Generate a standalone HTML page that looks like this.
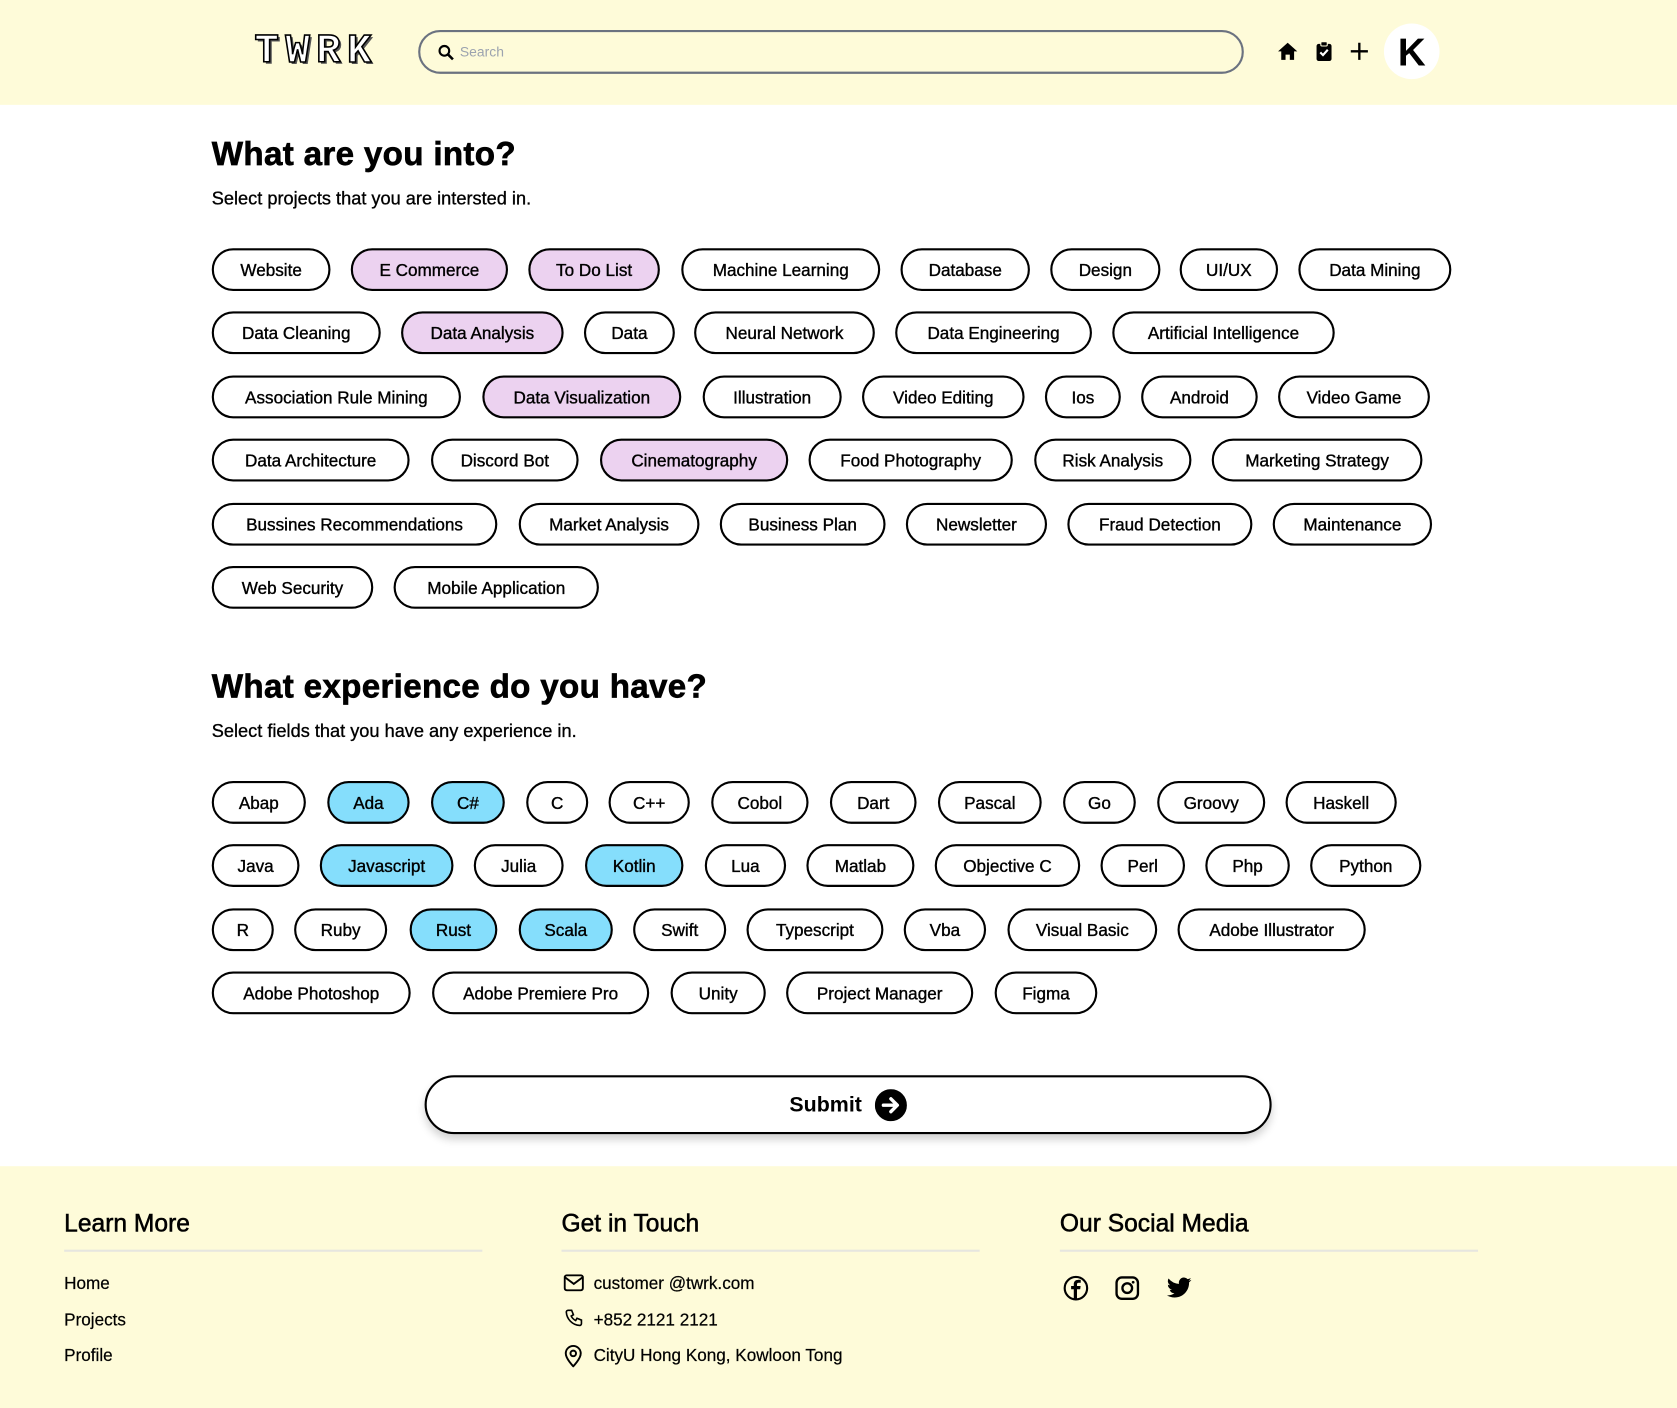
<!DOCTYPE html>
<html><head><meta charset="utf-8"><style>
*{box-sizing:border-box;margin:0;padding:0}
html,body{width:1677px;height:1408px;overflow:hidden;background:#fff;font-family:"Liberation Sans",sans-serif;color:#000}
#w{position:absolute;left:0;top:0;width:1568px;height:1316px;transform:scale(1.0695,1.0699);transform-origin:0 0;background:#fff}
.hdr{position:absolute;left:0;top:0;width:1568px;height:98px;background:#fefbd9}
.logo{position:absolute;left:238px;top:27px;font:bold 38px "Liberation Mono",monospace;color:#fff;-webkit-text-stroke:1.5px #000;letter-spacing:6px;text-shadow:2px 2px 0 #555}
.search{position:absolute;left:391px;top:28px;width:772px;height:41px;border:2px solid #6b7280;border-radius:21px}
.search span{position:absolute;left:37px;top:11px;font-size:13px;color:#9ca3af}
.c{position:absolute;height:40px;border:2px solid #000;border-radius:20px;font-size:16px;display:flex;align-items:center;justify-content:center;white-space:nowrap;background:#fff;padding-top:3px;-webkit-text-stroke:0.35px #000}
.p{background:#ecd2f0}.b{background:#85defc}
h1{position:absolute;left:198px;font-size:31px;font-weight:bold;-webkit-text-stroke:0.6px #000;letter-spacing:0.3px}
.sub{position:absolute;left:198px;font-size:17px;-webkit-text-stroke:0.3px #000}
.submit{position:absolute;left:397px;top:1005px;width:792px;height:55px;border:2px solid #000;border-radius:28px;box-shadow:0 5px 8px rgba(0,0,0,.18);display:flex;align-items:center;justify-content:center;font-size:20px;font-weight:bold;background:#fff;padding-top:2px}
.ftr{position:absolute;left:0;top:1090px;width:1568px;height:226px;background:#fefbd9}
.fh{position:absolute;top:1130px;font-size:23px;-webkit-text-stroke:0.5px #000}
.fl{position:absolute;top:1168px;width:391px;height:2px;background:#e6e6df}
.ft{position:absolute;font-size:16px;margin-top:2px;-webkit-text-stroke:0.2px #000}
</style></head><body><div id="w">
<div class="hdr"></div>
<div class="logo">TWRK</div>
<div class="search"><svg style="position:absolute;left:16px;top:11px" width="16" height="16" viewBox="0 0 16 16"><circle cx="6.5" cy="6.5" r="4.5" fill="none" stroke="#000" stroke-width="2"/><path d="M10 10l4.5 4.5" stroke="#000" stroke-width="2.4"/></svg><span>Search</span></div>
<svg style="position:absolute;left:1194px;top:39px" width="20" height="18" viewBox="0 0 20 18"><path d="M10 1L1 9h3v8h4v-5h4v5h4V9h3z" fill="#000"/></svg>
<svg style="position:absolute;left:1230px;top:38px" width="16" height="20" viewBox="0 0 16 20"><rect x="1" y="3" width="14" height="16" rx="2" fill="#000"/><rect x="5" y="1" width="6" height="4" rx="1" fill="#000" stroke="#fefbd9" stroke-width="1"/><path d="M4.5 11l2.5 2.5 4.5-5" stroke="#fff" stroke-width="2" fill="none"/></svg>
<svg style="position:absolute;left:1262px;top:39px" width="18" height="18" viewBox="0 0 18 18"><path d="M9 1v16M1 9h16" stroke="#000" stroke-width="2.2"/></svg>
<div style="position:absolute;left:1294px;top:22px;width:52px;height:52px;border-radius:50%;background:#fff;font:bold 36px 'Liberation Sans',sans-serif;display:flex;align-items:center;justify-content:center;padding-top:2px">K</div>

<h1 style="top:126px">What are you into?</h1>
<div class="sub" style="top:176px">Select projects that you are intersted in.</div>

<div class="c" style="top:232px;left:198px;width:111px">Website</div>
<div class="c p" style="top:232px;left:328px;width:147px">E Commerce</div>
<div class="c p" style="top:232px;left:494px;width:123px">To Do List</div>
<div class="c" style="top:232px;left:637px;width:186px">Machine Learning</div>
<div class="c" style="top:232px;left:842px;width:121px">Database</div>
<div class="c" style="top:232px;left:982px;width:103px">Design</div>
<div class="c" style="top:232px;left:1103px;width:92px">UI/UX</div>
<div class="c" style="top:232px;left:1214px;width:143px">Data Mining</div>

<div class="c" style="top:291px;left:198px;width:158px">Data Cleaning</div>
<div class="c p" style="top:291px;left:375px;width:152px">Data Analysis</div>
<div class="c" style="top:291px;left:546px;width:85px">Data</div>
<div class="c" style="top:291px;left:649px;width:169px">Neural Network</div>
<div class="c" style="top:291px;left:837px;width:184px">Data Engineering</div>
<div class="c" style="top:291px;left:1040px;width:208px">Artificial Intelligence</div>

<div class="c" style="top:351px;left:198px;width:233px">Association Rule Mining</div>
<div class="c p" style="top:351px;left:451px;width:186px">Data Visualization</div>
<div class="c" style="top:351px;left:657px;width:130px">Illustration</div>
<div class="c" style="top:351px;left:806px;width:152px">Video Editing</div>
<div class="c" style="top:351px;left:977px;width:71px">Ios</div>
<div class="c" style="top:351px;left:1067px;width:109px">Android</div>
<div class="c" style="top:351px;left:1195px;width:142px">Video Game</div>

<div class="c" style="top:410px;left:198px;width:185px">Data Architecture</div>
<div class="c" style="top:410px;left:403px;width:138px">Discord Bot</div>
<div class="c p" style="top:410px;left:561px;width:176px">Cinematography</div>
<div class="c" style="top:410px;left:756px;width:191px">Food Photography</div>
<div class="c" style="top:410px;left:967px;width:147px">Risk Analysis</div>
<div class="c" style="top:410px;left:1133px;width:197px">Marketing Strategy</div>

<div class="c" style="top:470px;left:198px;width:267px">Bussines Recommendations</div>
<div class="c" style="top:470px;left:485px;width:169px">Market Analysis</div>
<div class="c" style="top:470px;left:673px;width:155px">Business Plan</div>
<div class="c" style="top:470px;left:847px;width:132px">Newsletter</div>
<div class="c" style="top:470px;left:998px;width:173px">Fraud Detection</div>
<div class="c" style="top:470px;left:1190px;width:149px">Maintenance</div>

<div class="c" style="top:529px;left:198px;width:151px">Web Security</div>
<div class="c" style="top:529px;left:368px;width:192px">Mobile Application</div>

<h1 style="top:624px">What experience do you have?</h1>
<div class="sub" style="top:674px">Select fields that you have any experience in.</div>

<div class="c" style="top:730px;left:198px;width:88px">Abap</div>
<div class="c b" style="top:730px;left:306px;width:77px">Ada</div>
<div class="c b" style="top:730px;left:403px;width:69px">C#</div>
<div class="c" style="top:730px;left:492px;width:58px">C</div>
<div class="c" style="top:730px;left:569px;width:76px">C++</div>
<div class="c" style="top:730px;left:665px;width:91px">Cobol</div>
<div class="c" style="top:730px;left:776px;width:81px">Dart</div>
<div class="c" style="top:730px;left:877px;width:97px">Pascal</div>
<div class="c" style="top:730px;left:994px;width:68px">Go</div>
<div class="c" style="top:730px;left:1082px;width:101px">Groovy</div>
<div class="c" style="top:730px;left:1202px;width:104px">Haskell</div>

<div class="c" style="top:789px;left:198px;width:82px">Java</div>
<div class="c b" style="top:789px;left:299px;width:125px">Javascript</div>
<div class="c" style="top:789px;left:443px;width:84px">Julia</div>
<div class="c b" style="top:789px;left:547px;width:92px">Kotlin</div>
<div class="c" style="top:789px;left:659px;width:76px">Lua</div>
<div class="c" style="top:789px;left:754px;width:101px">Matlab</div>
<div class="c" style="top:789px;left:874px;width:136px">Objective C</div>
<div class="c" style="top:789px;left:1029px;width:79px">Perl</div>
<div class="c" style="top:789px;left:1127px;width:79px">Php</div>
<div class="c" style="top:789px;left:1225px;width:104px">Python</div>

<div class="c" style="top:849px;left:198px;width:58px">R</div>
<div class="c" style="top:849px;left:275px;width:87px">Ruby</div>
<div class="c b" style="top:849px;left:383px;width:82px">Rust</div>
<div class="c b" style="top:849px;left:485px;width:88px">Scala</div>
<div class="c" style="top:849px;left:592px;width:87px">Swift</div>
<div class="c" style="top:849px;left:698px;width:128px">Typescript</div>
<div class="c" style="top:849px;left:845px;width:77px">Vba</div>
<div class="c" style="top:849px;left:942px;width:140px">Visual Basic</div>
<div class="c" style="top:849px;left:1101px;width:176px">Adobe Illustrator</div>

<div class="c" style="top:908px;left:198px;width:186px">Adobe Photoshop</div>
<div class="c" style="top:908px;left:404px;width:203px">Adobe Premiere Pro</div>
<div class="c" style="top:908px;left:627px;width:89px">Unity</div>
<div class="c" style="top:908px;left:735px;width:175px">Project Manager</div>
<div class="c" style="top:908px;left:930px;width:96px">Figma</div>

<div class="submit">Submit<svg style="margin-left:12px;margin-top:-2px" width="30" height="30" viewBox="0 0 30 30"><circle cx="15" cy="15" r="15" fill="#000"/><path d="M8 15h12M15 9l6 6-6 6" stroke="#fff" stroke-width="3.2" fill="none" stroke-linecap="round" stroke-linejoin="round"/></svg></div>

<div class="ftr"></div>
<div class="fh" style="left:60px">Learn More</div>
<div class="fh" style="left:525px">Get in Touch</div>
<div class="fh" style="left:991px">Our Social Media</div>
<div class="fl" style="left:60px"></div><div class="fl" style="left:525px"></div><div class="fl" style="left:991px"></div>
<div class="ft" style="left:60px;top:1190px">Home</div>
<div class="ft" style="left:60px;top:1224px">Projects</div>
<div class="ft" style="left:60px;top:1257px">Profile</div>
<svg style="position:absolute;left:527px;top:1191px" width="19" height="16" viewBox="0 0 19 16"><rect x="1" y="1" width="17" height="14" rx="2" fill="none" stroke="#000" stroke-width="1.8"/><path d="M1.5 3l8 6 8-6" fill="none" stroke="#000" stroke-width="1.8"/></svg>
<div class="ft" style="left:555px;top:1190px">customer @twrk.com</div>
<svg style="position:absolute;left:527px;top:1223px" width="20" height="20" viewBox="0 0 24 24"><path d="M5 2h4l2 5-2.5 1.5a11 11 0 005 5L15 11l5 2v4a2 2 0 01-2 2A16 16 0 013 4a2 2 0 012-2" fill="none" stroke="#000" stroke-width="1.8"/></svg>
<div class="ft" style="left:555px;top:1224px">+852 2121 2121</div>
<svg style="position:absolute;left:527px;top:1256px" width="18" height="22" viewBox="0 0 18 22"><path d="M9 21s-7-7-7-12a7 7 0 0114 0c0 5-7 12-7 12z" fill="none" stroke="#000" stroke-width="1.8"/><circle cx="9" cy="9" r="2.6" fill="none" stroke="#000" stroke-width="1.8"/></svg>
<div class="ft" style="left:555px;top:1257px">CityU Hong Kong, Kowloon Tong</div>
<svg style="position:absolute;left:994px;top:1192px" width="24" height="24" viewBox="0 0 24 24"><circle cx="12" cy="12" r="10.5" fill="none" stroke="#000" stroke-width="2"/><path d="M13 22v-9h3l.4-3H13V8.5c0-1 .3-1.6 1.7-1.6H16.5V4.3A20 20 0 0014 4.2c-2.4 0-4 1.4-4 4V10H7.5v3H10v9" fill="#000"/></svg>
<svg style="position:absolute;left:1042px;top:1192px" width="24" height="24" viewBox="0 0 24 24"><rect x="2" y="2" width="20" height="20" rx="5" fill="none" stroke="#000" stroke-width="2.2"/><circle cx="12" cy="12" r="4.5" fill="none" stroke="#000" stroke-width="2.2"/><circle cx="17.5" cy="6.5" r="1.3" fill="#000"/></svg>
<svg style="position:absolute;left:1091px;top:1194px" width="24" height="20" viewBox="0 0 24 20"><path d="M23 2.3a9 9 0 01-2.7.8A4.7 4.7 0 0022.4.5a9.4 9.4 0 01-3 1.1A4.7 4.7 0 0011.4 6 13.4 13.4 0 011.6 1a4.7 4.7 0 001.5 6.3 4.7 4.7 0 01-2.1-.6 4.7 4.7 0 003.8 4.7 4.7 4.7 0 01-2.1.1 4.7 4.7 0 004.4 3.3A9.5 9.5 0 010 16.6 13.4 13.4 0 007.3 18.7c8.7 0 13.5-7.2 13.5-13.5v-.6A9.6 9.6 0 0023 2.3z" fill="#000"/></svg>
</div></body></html>
